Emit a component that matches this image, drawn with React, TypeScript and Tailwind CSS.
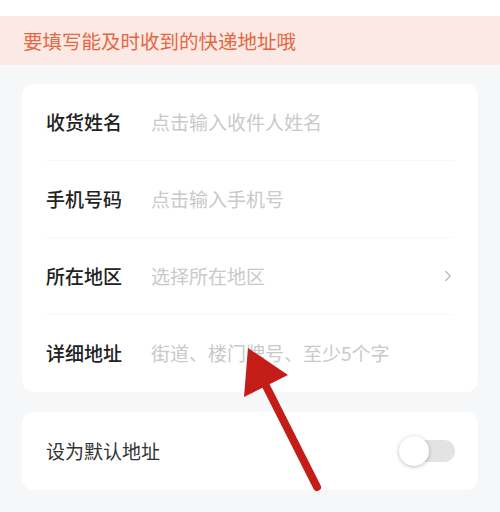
import { ChevronRight } from 'lucide-react';

const rows = [
  { label: '收货姓名', placeholder: '点击输入收件人姓名', arrow: false },
  { label: '手机号码', placeholder: '点击输入手机号', arrow: false },
  { label: '所在地区', placeholder: '选择所在地区', arrow: true },
  { label: '详细地址', placeholder: '街道、楼门牌号、至少5个字', arrow: false },
];

export default function App() {
  return (
    <div
      className="relative h-[512px] w-[500px] overflow-hidden bg-[#f6f7f9]"
      style={{ fontFamily: '"Noto Sans CJK SC", "Noto Sans", sans-serif' }}
    >
      <div className="h-4 bg-white" />
      <div className="flex h-[49px] items-center bg-[#fbe9e5] pl-[23px] text-[19.5px] text-[#e5673f]">
        要填写能及时收到的快递地址哦
      </div>

      <div className="px-[22px] pt-[19px]">
        <section className="rounded-[12px] bg-white px-[24px]">
          {rows.map((row, i) => (
            <div
              key={row.label}
              className={`flex h-[77px] items-center ${i < rows.length - 1 ? 'border-b border-[#f8f8f8]' : ''}`}
            >
              <span className="w-[105px] shrink-0 text-[19px] font-medium text-[#222]">{row.label}</span>
              <span className="flex-1 text-[19px] text-[#c9c9c9]">{row.placeholder}</span>
              {row.arrow && <ChevronRight className="mr-[-3px] h-[18px] w-[18px] text-[#b5b5b5]" strokeWidth={1.5} aria-hidden="true" />}
            </div>
          ))}
        </section>

        <section className="mt-[20px] flex h-[78px] items-center justify-between rounded-[12px] bg-white pl-[24px] pr-[23px]">
          <span className="text-[19px] text-[#333]">设为默认地址</span>
          <span className="relative flex h-[22px] w-[54px] items-center rounded-full bg-[#e3e3e3]">
            <span className="absolute left-[-2px] h-[30px] w-[30px] rounded-full bg-white shadow-[0_1px_4px_rgba(0,0,0,0.25)]" />
          </span>
        </section>
      </div>

      <svg className="pointer-events-none absolute left-0 top-0" width="500" height="512" viewBox="0 0 500 512">
        <line x1="317" y1="487" x2="262" y2="378" stroke="#c41c17" strokeWidth="8" strokeLinecap="round" />
        <polygon points="248,348 288,375 244,397" fill="#c41c17" />
      </svg>
    </div>
  );
}
